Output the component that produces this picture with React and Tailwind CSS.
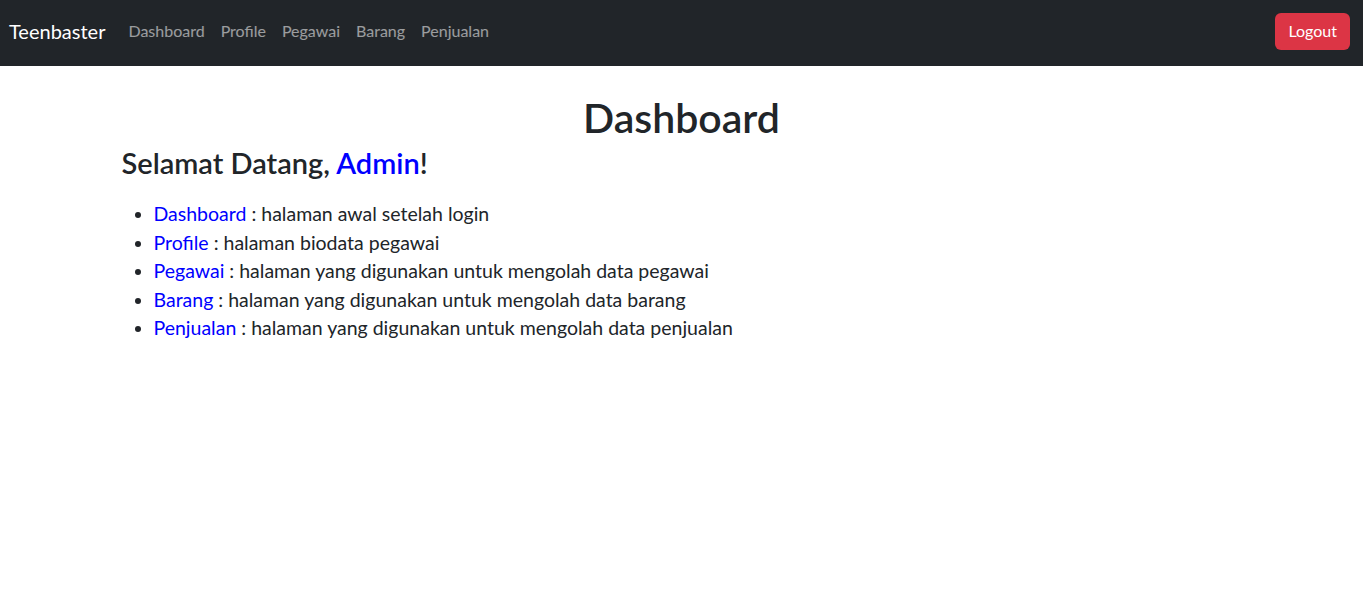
const navLinks = ['Dashboard', 'Profile', 'Pegawai', 'Barang', 'Penjualan'];

const pages = [
  { name: 'Dashboard', desc: 'halaman awal setelah login' },
  { name: 'Profile', desc: 'halaman biodata pegawai' },
  { name: 'Pegawai', desc: 'halaman yang digunakan untuk mengolah data pegawai' },
  { name: 'Barang', desc: 'halaman yang digunakan untuk mengolah data barang' },
  { name: 'Penjualan', desc: 'halaman yang digunakan untuk mengolah data penjualan' },
];

export default function App() {
  return (
    <div className="min-h-screen bg-white text-[#212529] font-['Lato','Noto_Sans',sans-serif]">
      <nav className="h-[66px] bg-[#212529] flex items-center pl-[9px] pr-[13px] pb-[4px]">
        <a href="#" className="text-white text-[20px] mr-[15px]">Teenbaster</a>
        <ul className="flex">
          {navLinks.map((link) => (
            <li key={link}>
              <a href="#" className="block px-2 text-[16px] text-white/55">{link}</a>
            </li>
          ))}
        </ul>
        <button className="ml-auto h-[37px] px-[13px] rounded-md bg-[#dc3545] text-white text-[16px]">
          Logout
        </button>
      </nav>

      <main className="w-[1140px] mx-auto px-[10px] pt-7">
        <h1 className="text-center text-[41px] leading-[48px] font-semibold mb-1">Dashboard</h1>
        <h3 className="text-[29px] leading-[34px] font-semibold mb-[20px]">
          Selamat Datang, <span className="text-[#0000ff]">Admin</span>!
        </h3>
        <ul className="list-disc pl-8 text-[19.5px] leading-[28.5px]">
          {pages.map((p) => (
            <li key={p.name}>
              <a href="#" className="text-[#0000ff]">{p.name}</a> : {p.desc}
            </li>
          ))}
        </ul>
      </main>
    </div>
  );
}
